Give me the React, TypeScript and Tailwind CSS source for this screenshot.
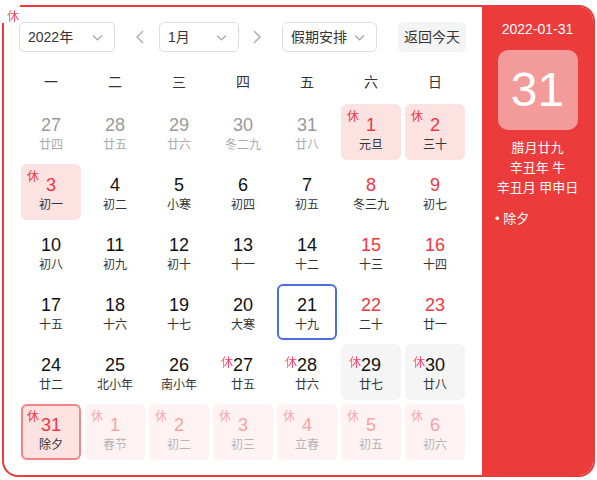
import React from 'react';

type Cell = {
  d: number;
  l: string;
  kind?: 'prev' | 'next' | 'hol' | 'today' | 'sel' | 'gray';
  red?: boolean;
  corner?: boolean; // 休 in the top-left corner
  sup?: boolean; // 休 next to the number
};

const rows: Cell[][] = [
  [
    { d: 27, l: '廿四', kind: 'prev' },
    { d: 28, l: '廿五', kind: 'prev' },
    { d: 29, l: '廿六', kind: 'prev' },
    { d: 30, l: '冬二九', kind: 'prev' },
    { d: 31, l: '廿八', kind: 'prev' },
    { d: 1, l: '元旦', kind: 'hol', red: true, corner: true },
    { d: 2, l: '三十', kind: 'hol', red: true, corner: true },
  ],
  [
    { d: 3, l: '初一', kind: 'hol', red: true, corner: true },
    { d: 4, l: '初二' },
    { d: 5, l: '小寒' },
    { d: 6, l: '初四' },
    { d: 7, l: '初五' },
    { d: 8, l: '冬三九', red: true },
    { d: 9, l: '初七', red: true },
  ],
  [
    { d: 10, l: '初八' },
    { d: 11, l: '初九' },
    { d: 12, l: '初十' },
    { d: 13, l: '十一' },
    { d: 14, l: '十二' },
    { d: 15, l: '十三', red: true },
    { d: 16, l: '十四', red: true },
  ],
  [
    { d: 17, l: '十五' },
    { d: 18, l: '十六' },
    { d: 19, l: '十七' },
    { d: 20, l: '大寒' },
    { d: 21, l: '十九', kind: 'today' },
    { d: 22, l: '二十', red: true },
    { d: 23, l: '廿一', red: true },
  ],
  [
    { d: 24, l: '廿二' },
    { d: 25, l: '北小年' },
    { d: 26, l: '南小年' },
    { d: 27, l: '廿五', sup: true },
    { d: 28, l: '廿六', sup: true },
    { d: 29, l: '廿七', kind: 'gray', sup: true },
    { d: 30, l: '廿八', kind: 'gray', sup: true },
  ],
  [
    { d: 31, l: '除夕', kind: 'sel', red: true, corner: true },
    { d: 1, l: '春节', kind: 'next', corner: true },
    { d: 2, l: '初二', kind: 'next', corner: true },
    { d: 3, l: '初三', kind: 'next', corner: true },
    { d: 4, l: '立春', kind: 'next', corner: true },
    { d: 5, l: '初五', kind: 'next', corner: true },
    { d: 6, l: '初六', kind: 'next', corner: true },
  ],
];

const weekdays = ['一', '二', '三', '四', '五', '六', '日'];

function Down() {
  return (
    <svg width="11" height="7" viewBox="0 0 11 7" fill="none">
      <path d="M1 1.5 L5.5 5.8 L10 1.5" stroke="#a8abb2" strokeWidth="1.3" />
    </svg>
  );
}

function Select({ label, w }: { label: string; w: string }) {
  return (
    <div
      className={`${w} h-[30px] flex items-center justify-between pl-2 pr-[11px] border border-[#dcdfe6] rounded-[5px] text-[14px] text-[#333]`}
    >
      <span>{label}</span>
      <Down />
    </div>
  );
}

function Arrow({ left }: { left?: boolean }) {
  return (
    <svg width="9" height="14" viewBox="0 0 9 14" fill="none">
      <path d={left ? 'M8 1 L2 7 L8 13' : 'M1 1 L7 7 L1 13'} stroke="#a8abb2" strokeWidth="1.4" />
    </svg>
  );
}

function Xiu() {
  return (
    <span className="text-[12px] leading-[14px] bg-gradient-to-r from-[#ff7a2c] via-[#ff3b62] to-[#f0128a] bg-clip-text text-transparent">
      休
    </span>
  );
}

function DayCell({ c }: { c: Cell }) {
  let box = 'bg-white';
  if (c.kind === 'hol') box = 'bg-[#fde2e2]';
  if (c.kind === 'next') box = 'bg-[#fef2f2]';
  if (c.kind === 'gray') box = 'bg-[#f5f5f5]';
  if (c.kind === 'sel') box = 'bg-[#fde2e2] border-2 border-[#f28585]';
  if (c.kind === 'today') box = 'bg-white border-2 border-[#4a6ee0]';

  let num = 'text-[#111]';
  let lunar = 'text-[#333]';
  if (c.red) num = 'text-[#f5343f]';
  if (c.kind === 'prev') {
    num = 'text-[#999]';
    lunar = 'text-[#aaa]';
  }
  if (c.kind === 'next') {
    num = 'text-[#f9a3a3]';
    lunar = 'text-[#b5b5b5]';
  }
  const bordered = c.kind === 'sel' || c.kind === 'today';

  return (
    <div
      className={`relative h-[56px] rounded-[6px] flex flex-col items-center ${bordered ? 'pt-[8px]' : 'pt-[10px]'} ${box}`}
    >
      {c.corner && (
        <span
          className={`absolute ${bordered ? 'left-[4px] top-[4px]' : 'left-[6px] top-[6px]'} text-[12px] leading-[14px] ${
            c.kind === 'next' ? 'text-[#f9aaaa]' : 'text-[#f5343f]'
          }`}
        >
          休
        </span>
      )}
      <span className={`relative text-[18px] leading-[22px] ${num}`}>
        {c.sup && (
          <span className="absolute right-full -top-[4px]">
            <Xiu />
          </span>
        )}
        {c.d}
      </span>
      <span className={`mt-[1px] text-[12px] leading-[16px] ${lunar}`}>{c.l}</span>
    </div>
  );
}

export default function App() {
  return (
    <div
      className="relative w-[597px] h-[480px] bg-white pt-[5px] pl-[2px]"
      style={{ fontFamily: '"Liberation Sans", "Noto Sans CJK SC", sans-serif' }}
    >
      <div className="w-[593px] h-[472px] border-2 border-[#eb3b3b] rounded-[16px] flex overflow-hidden">
        {/* left: calendar */}
        <div className="w-[478px] flex flex-col">
          <div className="flex items-center mt-[15px] ml-[15px]">
            <Select label="2022年" w="w-[96px]" />
            <div className="ml-[20px] mr-[15px] flex">
              <Arrow left />
            </div>
            <Select label="1月" w="w-[80px]" />
            <div className="ml-[14px] mr-[20px] flex">
              <Arrow />
            </div>
            <Select label="假期安排" w="w-[95px]" />
            <div className="ml-[21px] w-[68px] h-[30px] flex items-center justify-center rounded-[5px] bg-[#f4f4f5] text-[14px] text-[#333]">
              返回今天
            </div>
          </div>

          <div className="ml-[17px] w-[444px] mt-[8px] h-[44px] grid grid-cols-7 gap-1 items-center text-[14px] text-[#333]">
            {weekdays.map((w) => (
              <div key={w} className="text-center">
                {w}
              </div>
            ))}
          </div>

          <div className="ml-[17px] w-[444px] grid grid-cols-7 gap-1">
            {rows.flat().map((c, i) => (
              <DayCell key={i} c={c} />
            ))}
          </div>
        </div>

        {/* right: selected day */}
        <div className="flex-1 bg-[#eb3b3b] flex flex-col items-center text-white">
          <div className="mt-[12px] text-[14px] leading-[20px]">2022-01-31</div>
          <div className="mt-[11px] w-[80px] h-[80px] rounded-[10px] bg-[#f39b9b] flex items-center justify-center text-[48px] leading-none">
            31
          </div>
          <div className="mt-[8px] text-[13px] leading-[20px] text-center">
            <div>腊月廿九</div>
            <div>辛丑年 牛</div>
            <div>辛丑月 甲申日</div>
          </div>
          <div className="self-start ml-[13px] mt-[12px] text-[13px] leading-[18px]">• 除夕</div>
        </div>
      </div>

      <div className="absolute left-0 top-0 w-[20px] h-[23px] bg-white pl-[7px] pt-[4px]">
        <Xiu />
      </div>
    </div>
  );
}
